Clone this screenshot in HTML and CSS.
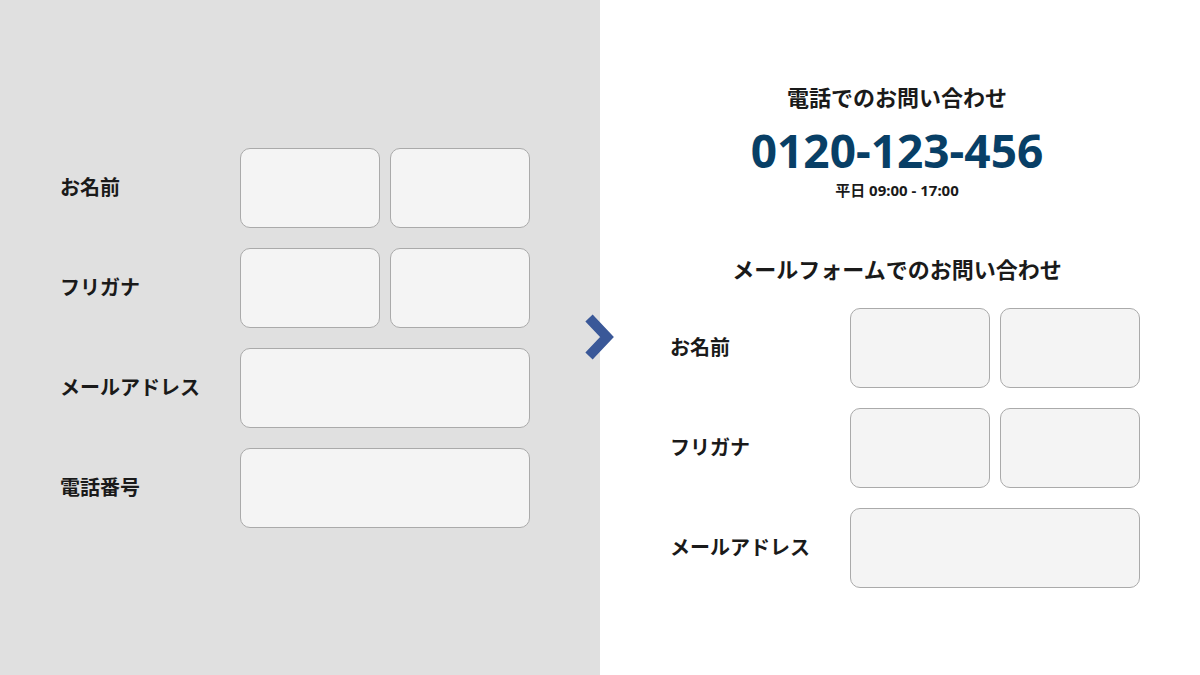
FILE: index.html
```html
<!DOCTYPE html>
<html lang="ja">
<head>
<meta charset="utf-8">
<link rel="stylesheet" href="styles.css">
</head>
<body>
<div class="page">
  <section class="panel left">
    <div class="form">
      <div class="row"><div class="label">お名前</div><div class="fields"><div class="box"></div><div class="box"></div></div></div>
      <div class="row"><div class="label">フリガナ</div><div class="fields"><div class="box"></div><div class="box"></div></div></div>
      <div class="row"><div class="label">メールアドレス</div><div class="fields"><div class="box wide"></div></div></div>
      <div class="row"><div class="label">電話番号</div><div class="fields"><div class="box wide"></div></div></div>
    </div>
  </section>
  <section class="panel right">
    <div class="head">
      <h2 class="title">電話でのお問い合わせ</h2>
      <div class="phone">0120-123-456</div>
      <div class="hours">平日 09:00 - 17:00</div>
      <h2 class="title mail">メールフォームでのお問い合わせ</h2>
    </div>
    <div class="form">
      <div class="row"><div class="label">お名前</div><div class="fields"><div class="box"></div><div class="box"></div></div></div>
      <div class="row"><div class="label">フリガナ</div><div class="fields"><div class="box"></div><div class="box"></div></div></div>
      <div class="row"><div class="label">メールアドレス</div><div class="fields"><div class="box wide"></div></div></div>
    </div>
  </section>
  <svg class="arrow" width="40" height="60" viewBox="0 0 40 60"><polyline points="9,8 27,27 9,46" fill="none" stroke="#3a5898" stroke-width="10" stroke-linejoin="miter"/></svg>
</div>
</body>
</html>
```

FILE: styles.css
```css
* { box-sizing: border-box; }
html, body { margin: 0; padding: 0; }
body {
  font-family: "Noto Sans", "Noto Sans CJK JP", sans-serif;
  color: #1a1a1a;
  width: 1200px;
  height: 675px;
  overflow: hidden;
}
.page {
  position: relative;
  display: flex;
  width: 1200px;
  height: 675px;
}
.panel {
  width: 600px;
  height: 675px;
  display: flex;
  flex-direction: column;
}
.left {
  background: #e0e0e0;
  justify-content: center;
  padding-left: 60px;
}
.right {
  background: #ffffff;
  padding-left: 70px;
  padding-top: 82px;
}
.head {
  margin-left: -70px;
  width: 594px;
  display: flex;
  flex-direction: column;
  align-items: center;
  text-align: center;
}
.form {
  display: flex;
  flex-direction: column;
  gap: 20px;
}
.row {
  display: flex;
  align-items: center;
  height: 80px;
}
.label {
  width: 180px;
  font-size: 20px;
  font-weight: 700;
  line-height: 26px;
}
.fields {
  display: flex;
  gap: 10px;
  height: 80px;
}
.box {
  width: 140px;
  height: 80px;
  background: #f4f4f4;
  border: 1px solid #aaaaaa;
  border-radius: 10px;
}
.box.wide { width: 290px; }
.title {
  margin: 0;
  font-size: 22px;
  line-height: 30px;
  font-weight: 700;
}
.phone {
  margin-top: 10px;
  font-size: 46px;
  line-height: 56px;
  font-weight: 700;
  color: #083f66;
}
.hours {
  font-size: 15px;
  line-height: 20px;
  font-weight: 700;
  margin-top: 2px;
}
.title.mail {
  margin-top: 54px;
  margin-bottom: 24px;
}
.arrow {
  position: absolute;
  left: 580px;
  top: 310px;
}
```
